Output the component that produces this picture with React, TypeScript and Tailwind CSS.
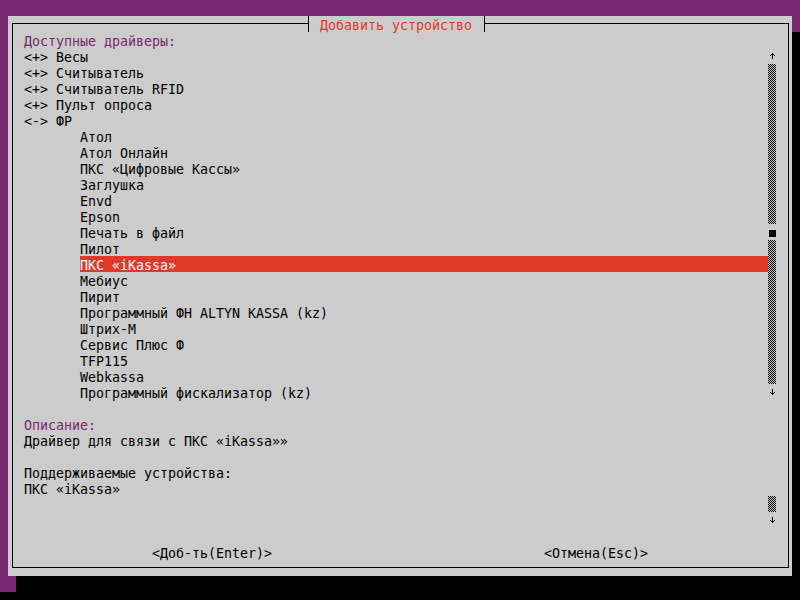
import { ReactNode } from "react";

const drivers = ["<+> Весы", "<+> Считыватель", "<+> Считыватель RFID", "<+> Пульт опроса", "<-> ФР"];

const fiscal = [
  "Атол",
  "Атол Онлайн",
  "ПКС «Цифровые Кассы»",
  "Заглушка",
  "Envd",
  "Epson",
  "Печать в файл",
  "Пилот",
  "ПКС «iKassa»",
  "Мебиус",
  "Пирит",
  "Программный ФН ALTYN KASSA (kz)",
  "Штрих-М",
  "Сервис Плюс Ф",
  "TFP115",
  "Webkassa",
  "Программный фискализатор (kz)"
];

const selected = "ПКС «iKassa»";

// one terminal line, 16px tall
function Line({ children, className = "" }: { children?: ReactNode; className?: string }) {
  return <div className={`h-4 pt-[3px] leading-[13px] whitespace-pre ${className}`}>{children}</div>;
}

// ▒ shade cells of the scrollbar track
function Track({ height }: { height: number }) {
  return (
    <svg width={8} height={height} shapeRendering="crispEdges" className="block">
      <defs>
        <pattern id={`shade-${height}`} width={2} height={2} patternUnits="userSpaceOnUse">
          <rect width={2} height={2} fill="#cccccc" />
          <rect width={1} height={1} fill="#000" />
          <rect x={1} y={1} width={1} height={1} fill="#000" />
        </pattern>
      </defs>
      <rect width={8} height={height} fill={`url(#shade-${height})`} />
    </svg>
  );
}

function Arrow({ down = false }: { down?: boolean }) {
  return (
    <svg width={8} height={16} shapeRendering="crispEdges" className="block">
      <rect x={4} y={5} width={1} height={6} fill="#000" />
      {down ? (
        <>
          <rect x={3} y={9} width={3} height={1} fill="#000" />
          <rect x={2} y={8} width={1} height={1} fill="#000" />
          <rect x={6} y={8} width={1} height={1} fill="#000" />
        </>
      ) : (
        <>
          <rect x={3} y={6} width={3} height={1} fill="#000" />
          <rect x={2} y={7} width={1} height={1} fill="#000" />
          <rect x={6} y={7} width={1} height={1} fill="#000" />
        </>
      )}
    </svg>
  );
}

export default function App() {
  return (
    <div className="w-[800px] h-[600px] overflow-hidden bg-black font-['DejaVu_Sans_Mono','Liberation_Mono',monospace] text-[13.29px] text-black">
      <div className="h-[592px] bg-[#772870] pl-2 pt-4">
        <div className="w-[784px] h-[560px] bg-[#cccccc] shadow-[8px_16px_0_0_#000] pl-1 pt-[7px]">
          <div className="relative w-[777px] h-[545px] border border-black pl-[11px] pt-2">
            <div className="absolute left-[295px] top-[-8px] h-4 w-[177px] border-x border-black bg-[#cccccc] pl-[11px] pt-[3px] leading-[13px] text-[#e0392b] whitespace-pre">
              Добавить устройство
            </div>

            <div className="flex w-[752px]">
              <div className="w-[744px]">
                <Line className="text-[#772870]">Доступные драйверы:</Line>
                {drivers.map((d) => (
                  <Line key={d}>{d}</Line>
                ))}
                {fiscal.map((name) =>
                  name === selected ? (
                    <div key={name} className="flex h-4 pl-14">
                      <div className="flex-1 bg-[#e0392b] pt-[3px] leading-[13px] text-white whitespace-pre">{name}</div>
                    </div>
                  ) : (
                    <Line key={name} className="pl-14">
                      {name}
                    </Line>
                  )
                )}
              </div>
              <div className="w-2">
                <div className="h-4" />
                <Arrow />
                <Track height={160} />
                <div className="h-4 pl-[1px] pt-[6px]">
                  <div className="w-[7px] h-[7px] bg-black" />
                </div>
                <Track height={144} />
                <Arrow down />
              </div>
            </div>

            <Line />

            <div className="flex w-[752px]">
              <div className="w-[744px]">
                <Line className="text-[#772870]">Описание:</Line>
                <Line>Драйвер для связи с ПКС «iKassa»»</Line>
                <Line />
                <Line>Поддерживаемые устройства:</Line>
                <Line>ПКС «iKassa»</Line>
                <Line />
                <Line />
                <Line />
              </div>
              <div className="w-2">
                <div className="h-20" />
                <Track height={16} />
                <Arrow down />
                <div className="h-4" />
              </div>
            </div>

            <div className="flex h-4 gap-[272px] pl-32 pt-[3px] leading-[13px] whitespace-pre">
              <span>{"<Доб-ть(Enter)>"}</span>
              <span>{"<Отмена(Esc)>"}</span>
            </div>
          </div>
        </div>
      </div>
    </div>
  );
}
